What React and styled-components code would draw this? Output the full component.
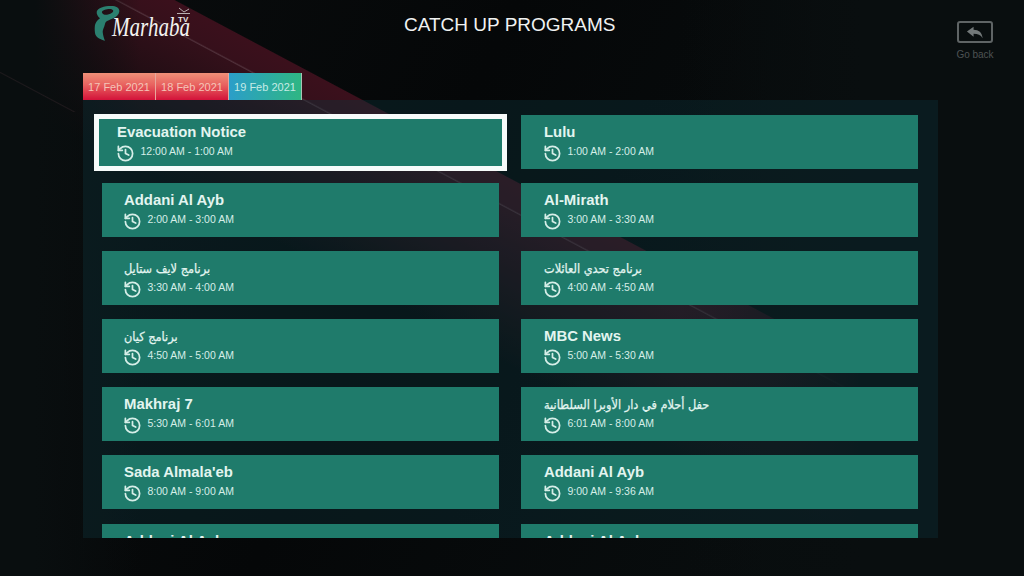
import React from 'react';
import styled, { createGlobalStyle } from 'styled-components';
import { History } from 'lucide-react';

const GlobalStyle = createGlobalStyle`
  html, body {
    margin: 0;
    padding: 0;
    background: #090e0f;
  }
  * { box-sizing: border-box; }
`;

const Page = styled.div`
  width: 1024px;
  height: 576px;
  overflow: hidden;
  padding: 0 31px 0 83px;
  font-family: "Liberation Sans", "DejaVu Sans", sans-serif;
  background:
    linear-gradient(28deg, transparent 34px, rgba(110, 70, 80, 0.2) 35px, transparent 36px) 0 0 / 90px 112px no-repeat,
    linear-gradient(90deg, #090e0f 35px, transparent 140px),
    linear-gradient(90deg, transparent 680px, #090e0f 860px),
    linear-gradient(28deg,
      transparent 425px,
      #1c0d12 490px,
      #33101a 562px,
      #50303a 563px,
      #36101b 564.5px,
      #3b101c 590px,
      transparent 591px),
    linear-gradient(115deg, #0a0d0e 0%, #050708 40%, #0a1011 100%);
`;

const Header = styled.header`
  display: grid;
  grid-template-columns: 321px 212px 1fr;
  height: 73px;
`;

const Logo = styled.svg`
  display: block;
  margin: 3px 0 0 9px;
`;

const Title = styled.h1`
  margin: 14px 0 0;
  font-size: 19px;
  font-weight: 400;
  line-height: 22px;
  color: #f0f2f2;
  white-space: nowrap;
`;

const Back = styled.div`
  justify-self: end;
  display: flex;
  flex-direction: column;
  align-items: center;
  margin-top: 21px;
  width: 36px;
`;

const BackBox = styled.div`
  width: 36px;
  height: 22px;
  border: 2px solid #5f6465;
  border-radius: 3px;
  display: flex;
  align-items: center;
  justify-content: center;
`;

const BackLabel = styled.span`
  margin-top: 5px;
  font-size: 10px;
  line-height: 13px;
  color: #4d5253;
  white-space: nowrap;
`;

const Tabs = styled.nav`
  display: flex;
  width: 219px;
  height: 27px;
`;

const Tab = styled.div`
  flex: 1;
  display: flex;
  align-items: center;
  justify-content: center;
  font-size: 11px;
  border-right: 1.5px solid ${p => (p.$active ? '#a8c4b4' : '#e8a79c')};
  color: ${p => (p.$active ? '#c6ebe6' : '#f4c4b8')};
  background: ${p => (p.$active
    ? 'linear-gradient(90deg, #2b9ec9, #2fb683)'
    : 'linear-gradient(180deg, #ef9078 0%, #e8615f 45%, #d3123a 100%)')};
`;

const Panel = styled.main`
  width: 855px;
  height: 438px;
  overflow: hidden;
  padding: 15px 20px 0 19px;
  background: rgba(14, 52, 60, 0.36);
`;

const Grid = styled.div`
  display: grid;
  grid-template-columns: 397px 397px;
  grid-auto-rows: 54px;
  column-gap: 22px;
  row-gap: 14.1px;
`;

const Card = styled.article`
  background: #1f7b6b;
  color: #e3f5f0;
  padding: 8px 0 0 22px;
  &:nth-child(even) {
    padding-left: 23px;
  }
  ${p => p.$focused && `
    margin: -1px -8px -1.5px;
    border: 5px solid #f7fbfa;
    padding: 4px 0 0 18px;
  `}
`;

const ProgramName = styled.div`
  height: 18px;
  font-size: 14.9px;
  font-weight: 700;
  line-height: 18px;
  white-space: nowrap;
`;

const ArabicText = styled.span`
  display: inline-block;
  direction: rtl;
  font-family: "DejaVu Sans", sans-serif;
  font-size: 12.6px;
  font-weight: 400;
  -webkit-text-stroke: 0.25px #e3f5f0;
  transform: scaleX(0.9);
  transform-origin: left center;
`;

const TimeRow = styled.div`
  display: flex;
  align-items: center;
  gap: 6px;
  margin-top: 2px;
  font-size: 10.5px;
  line-height: 16px;
  color: #d6eee8;
`;

const ClockIcon = styled(History)`
  flex: none;
  margin: 0.5px 0 -3.5px -1.5px;
`;

const programs = [
  { name: 'Evacuation Notice', time: '12:00 AM - 1:00 AM', focused: true },
  { name: 'Lulu', time: '1:00 AM - 2:00 AM' },
  { name: 'Addani Al Ayb', time: '2:00 AM - 3:00 AM' },
  { name: 'Al-Mirath', time: '3:00 AM - 3:30 AM' },
  { name: 'برنامج لايف ستايل', time: '3:30 AM - 4:00 AM', arabic: true },
  { name: 'برنامج تحدي العائلات', time: '4:00 AM - 4:50 AM', arabic: true },
  { name: 'برنامج كيان', time: '4:50 AM - 5:00 AM', arabic: true },
  { name: 'MBC News', time: '5:00 AM - 5:30 AM' },
  { name: 'Makhraj 7', time: '5:30 AM - 6:01 AM' },
  { name: 'حفل أحلام في دار الأوبرا السلطانية', time: '6:01 AM - 8:00 AM', arabic: true },
  { name: "Sada Almala'eb", time: '8:00 AM - 9:00 AM' },
  { name: 'Addani Al Ayb', time: '9:00 AM - 9:36 AM' },
  { name: 'Addani Al Ayb', time: '9:36 AM - 10:00 AM' },
  { name: 'Addani Al Ayb', time: '10:00 AM - 10:30 AM' },
];

const MarhabaLogo = () => (
  <Logo width="104" height="42" viewBox="0 0 104 42">
    <path
      fillRule="evenodd"
      d="M4.7 8.7 C5.5 4.5 14 2.5 21 3 C25.5 3.4 27.8 6 27.3 8.7 C26.8 12 24 14 21.3 15.3 C17 17.3 13.5 18 13 21 C12.2 24.5 10.5 27 10.7 29 C11 32.5 12 35.5 13 37.7 C8 36.5 3.5 34 3 30 C2.5 26.5 2.7 24 3 22 C3.6 19 6 17 8 15.3 C6 13.5 4.3 11 4.7 8.7 Z M10 9.5 C10.6 11.3 13 12.4 16 11.6 C19.5 10.7 21.6 9.2 21.2 7.6 C20.7 6 18 5.6 15 6.3 C12 7 9.5 8 10 9.5 Z"
      fill="#2b7f6f"
    />
    <text
      x="20"
      y="33"
      fontFamily="'Liberation Serif', serif"
      fontStyle="italic"
      fontSize="27"
      fill="#f2f2f0"
      textLength="78"
      lengthAdjust="spacingAndGlyphs"
    >
      Marhaba
    </text>
    <text x="86" y="19" fontFamily="'Liberation Sans', sans-serif" fontWeight="700" fontSize="8" fill="#e8e8e6">
      TV
    </text>
    <path d="M87 5 L92 9 L97 6 M85 10.5 H98" stroke="#d8d8d6" strokeWidth="0.8" fill="none" />
  </Logo>
);

const BackArrow = () => (
  <svg width="18" height="13" viewBox="0 0 19 13">
    <path d="M1 5.5 L8 0.5 V3.6 C13.5 3.6 17 6.5 17.5 12.5 C15.5 9.2 12.5 7.9 8 7.9 V11 Z" fill="#727879" />
  </svg>
);

export default function App() {
  return (
    <>
      <GlobalStyle />
      <Page>
        <Header>
          <MarhabaLogo />
          <Title>CATCH UP PROGRAMS</Title>
          <Back>
            <BackBox>
              <BackArrow />
            </BackBox>
            <BackLabel>Go back</BackLabel>
          </Back>
        </Header>
        <Tabs>
          <Tab>17 Feb 2021</Tab>
          <Tab>18 Feb 2021</Tab>
          <Tab $active>19 Feb 2021</Tab>
        </Tabs>
        <Panel>
          <Grid>
            {programs.map((p, i) => (
              <Card key={i} $focused={p.focused}>
                <ProgramName>
                  {p.arabic ? <ArabicText>{p.name}</ArabicText> : p.name}
                </ProgramName>
                <TimeRow>
                  <ClockIcon size={19} strokeWidth={2.2} />
                  {p.time}
                </TimeRow>
              </Card>
            ))}
          </Grid>
        </Panel>
      </Page>
    </>
  );
}
